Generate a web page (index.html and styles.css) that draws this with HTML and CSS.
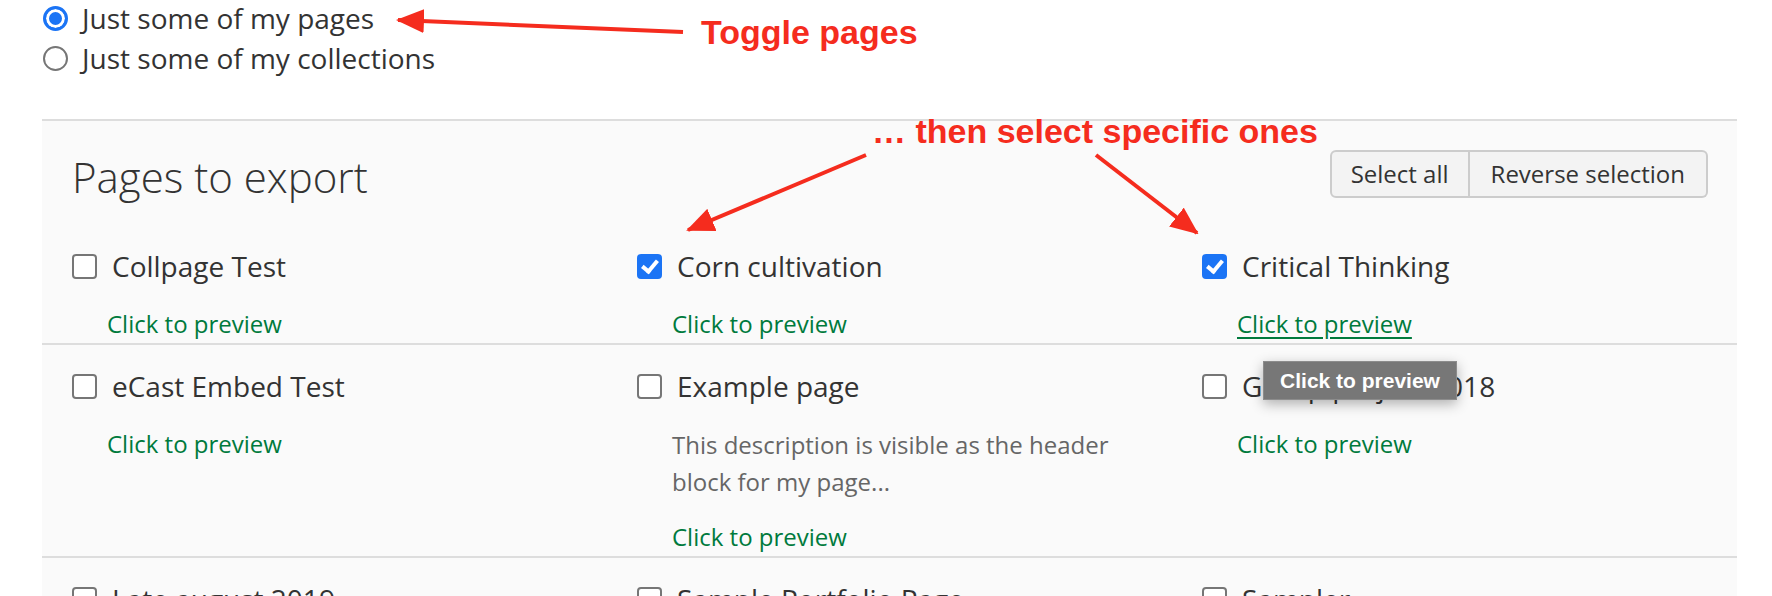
FILE: index.html
```html
<!DOCTYPE html>
<html lang="en">
<head>
<meta charset="UTF-8">
<title>Export pages</title>
<meta name="viewport" content="width=device-width,initial-scale=1">
<link rel="stylesheet" href="styles.css">
</head>
<body>

<div class="page">
  <div class="choices">
    <label class="choice"><input type="radio" name="what" checked> Just some of my pages</label>
    <label class="choice"><input type="radio" name="what"> Just some of my collections</label>
  </div>

  <section class="panel">
    <div class="panel-head">
      <h2>Pages to export</h2>
      <div class="btn-group">
        <button type="button">Select all</button>
        <button type="button">Reverse selection</button>
      </div>
    </div>

    <div class="row first">
      <div class="item">
        <label class="title"><input type="checkbox"> Collpage Test</label>
        <a class="preview" href="#">Click to preview</a>
      </div>
      <div class="item">
        <label class="title"><input type="checkbox" checked> Corn cultivation</label>
        <a class="preview" href="#">Click to preview</a>
      </div>
      <div class="item">
        <label class="title"><input type="checkbox" checked> Critical Thinking</label>
        <a class="preview hover" href="#">Click to preview</a>
        <span class="tooltip">Click to preview</span>
      </div>
    </div>

    <div class="row">
      <div class="item">
        <label class="title"><input type="checkbox"> eCast Embed Test</label>
        <a class="preview" href="#">Click to preview</a>
      </div>
      <div class="item">
        <label class="title"><input type="checkbox"> Example page</label>
        <p class="desc">This description is visible as the header block for my page...</p>
        <a class="preview" href="#">Click to preview</a>
      </div>
      <div class="item">
        <label class="title"><input type="checkbox"> Group project 2018</label>
        <a class="preview" href="#">Click to preview</a>
      </div>
    </div>

    <div class="row">
      <div class="item">
        <label class="title"><input type="checkbox"> Late august 2019</label>
        <a class="preview" href="#">Click to preview</a>
      </div>
      <div class="item">
        <label class="title"><input type="checkbox"> Sample Portfolio Page</label>
        <a class="preview" href="#">Click to preview</a>
      </div>
      <div class="item">
        <label class="title"><input type="checkbox"> Sampler</label>
        <a class="preview" href="#">Click to preview</a>
      </div>
    </div>
  </section>
</div>

<!-- annotations drawn over the screenshot -->
<div class="note note-toggle">Toggle pages</div>
<div class="note note-select">… then select specific ones</div>
<svg class="arrows" width="1772" height="596" viewBox="0 0 1772 596">
  <defs>
    <marker id="head" markerUnits="userSpaceOnUse" markerWidth="28" markerHeight="24" refX="26" refY="12" orient="auto">
      <path d="M0,0 L28,12 L0,24 z" fill="#f52c1e"/>
    </marker>
  </defs>
  <line x1="683" y1="32" x2="398" y2="20" stroke="#f52c1e" stroke-width="4" marker-end="url(#head)"/>
  <line x1="866" y1="155" x2="688" y2="230" stroke="#f52c1e" stroke-width="4" marker-end="url(#head)"/>
  <line x1="1096" y1="155" x2="1197" y2="233" stroke="#f52c1e" stroke-width="4" marker-end="url(#head)"/>
</svg>

</body>
</html>
```

FILE: styles.css
```css
body {
  margin: 0;
  font-family: "Open Sans", "Liberation Sans", sans-serif;
  color: #333;
  background: #fff;
  position: relative;
  overflow: hidden;
  height: 596px;
}
.page {
  padding: 0 35px 0 42px;
}

.choices {
  margin-top: -2px;
}
.choice {
  display: flex;
  align-items: center;
  gap: 14px;
  height: 40px;
  font-size: 28px;
  padding-left: 1px;
}
.choice input {
  appearance: none;
  margin: 0;
  width: 25px;
  height: 25px;
  border: 2px solid #767676;
  border-radius: 50%;
  background: #fff;
}
.choice input:checked {
  border: 3px solid #1b74f5;
  background: #1b74f5;
  box-shadow: inset 0 0 0 3px #fff;
}

.panel {
  margin-top: 41px;
  border-top: 2px solid #ddd;
  background: #fafafa;
}
.panel-head {
  display: flex;
  justify-content: space-between;
  align-items: center;
  padding: 32px 29px 0 30px;
}
.panel-head h2 {
  margin: 0;
  font-size: 42px;
  font-weight: 300;
  line-height: 48px;
  color: #333;
}
.btn-group {
  display: flex;
  margin-top: -6px;
}
.btn-group button {
  font: inherit;
  font-size: 24px;
  line-height: 36px;
  color: #333;
  background: #f3f3f3;
  border: 2px solid #ccc;
  padding: 4px 21px;
  margin: 0;
}
.btn-group button:first-child {
  border-radius: 6px 0 0 6px;
  padding: 4px 19px 4px 19px;
}
.btn-group button:last-child {
  border-left: 0;
  border-radius: 0 6px 6px 0;
}

.row {
  display: grid;
  grid-template-columns: repeat(3, 1fr);
  border-top: 2px solid #ddd;
  padding: 20px 0 1px;
}
.row.first {
  border-top: 0;
  padding-top: 44px;
}
.item {
  position: relative;
  padding: 0 30px;
}
.title {
  display: flex;
  align-items: center;
  gap: 15px;
  font-size: 28px;
  line-height: 42px;
}
.title input {
  appearance: none;
  position: relative;
  margin: 0;
  width: 25px;
  height: 25px;
  border: 2px solid #767676;
  border-radius: 4px;
  background: #fff;
  flex: none;
}
.title input:checked {
  border-color: #1b74f5;
  background: #1b74f5;
}
.title input:checked::after {
  content: "";
  position: absolute;
  left: 6px;
  top: 1px;
  width: 6px;
  height: 12px;
  border: solid #fff;
  border-width: 0 4px 4px 0;
  transform: rotate(40deg);
}
.preview {
  display: block;
  width: max-content;
  margin: 19px 0 0 35px;
  font-size: 24px;
  line-height: 36px;
  color: #007a3d;
  text-decoration: none;
}
.preview.hover {
  text-decoration: underline;
  text-underline-offset: 4px;
}
.desc {
  margin: 19px 0 0 35px;
  font-size: 24px;
  line-height: 37px;
  color: #666;
}

.tooltip {
  position: absolute;
  z-index: 5;
  left: 91px;
  top: 116px;
  width: 192px;
  height: 37px;
  display: flex;
  align-items: center;
  justify-content: center;
  background: #777;
  border: 1px solid #8c8c8c;
  color: #fff;
  font-family: "Liberation Sans", sans-serif;
  font-size: 21px;
  font-weight: bold;
  white-space: nowrap;
  box-shadow: 0 4px 12px rgba(0, 0, 0, 0.3);
}

.note {
  position: absolute;
  color: #f52c1e;
  font-family: "Liberation Sans", Arial, sans-serif;
  font-weight: bold;
  font-size: 34px;
  line-height: 40px;
  white-space: nowrap;
}
.note-toggle {
  left: 701px;
  top: 12px;
}
.note-select {
  left: 872px;
  top: 111px;
}
.arrows {
  position: absolute;
  left: 0;
  top: 0;
  pointer-events: none;
  z-index: 6;
}
```
